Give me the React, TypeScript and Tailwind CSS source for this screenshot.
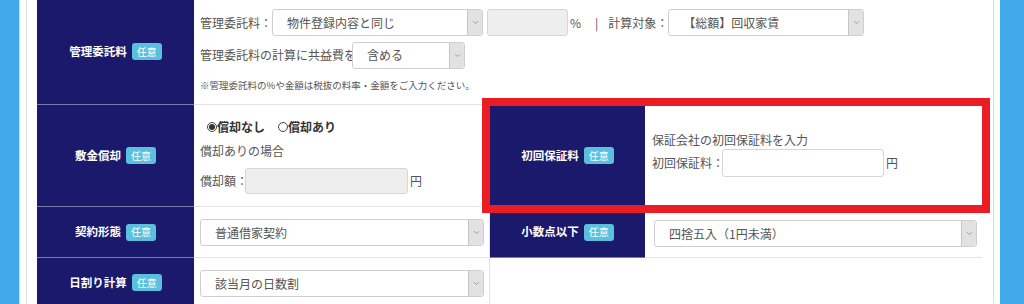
import React from 'react';
import { ChevronDown } from 'lucide-react';

const font = "font-['Noto_Sans_CJK_JP','Noto_Sans',sans-serif]";

function Badge() {
  return (
    <span className="inline-flex h-[17px] items-center rounded-[3px] bg-[#5bc0de] px-[5px] text-[10px] font-normal leading-none text-white">
      任意
    </span>
  );
}

function LabelCell({ title, className = '' }: { title: string; className?: string }) {
  return (
    <div className={`flex items-center justify-center gap-[5px] border-b border-[#7a7aab] bg-[#1b196b] ${className}`}>
      <span className="whitespace-nowrap text-[11.5px] font-bold text-white">{title}</span>
      <Badge />
    </div>
  );
}

function Select({ value, className = '' }: { value: string; className?: string }) {
  return (
    <div className={`flex h-[27px] shrink-0 items-stretch rounded-[3px] border border-[#cfcfcf] bg-white ${className}`}>
      <div className="flex flex-1 items-center whitespace-nowrap pl-[14px] text-[12px] text-[#555]">{value}</div>
      <div className="flex w-[15px] items-center justify-center rounded-r-[3px] border-l border-[#c6c6c6] bg-[#e2e2e2]">
        <ChevronDown size={9} strokeWidth={2} className="text-[#8a8a8a]" />
      </div>
    </div>
  );
}

function Radio({ checked, label }: { checked?: boolean; label: string }) {
  return (
    <span className="flex items-center">
      <span className="flex h-[10px] w-[10px] items-center justify-center rounded-full border border-[#444] bg-white">
        {checked && <span className="h-[6px] w-[6px] rounded-full bg-[#333]" />}
      </span>
      <span className="whitespace-nowrap text-[12px] font-bold text-[#333]">{label}</span>
    </span>
  );
}

export default function App() {
  return (
    <div className={`flex h-[304px] w-[1024px] overflow-hidden bg-white ${font}`}>
      <div className="w-[20px] border-r border-[#bfe0f7] bg-[#42aaec]" />
      <div className="flex-1 px-[6px]">
        <div className="h-full border-x border-[#dedede] pl-[10px] pr-[11px]">
          <div className="relative -mt-[1px] grid grid-cols-[157px_296px_155px_337px] grid-rows-[106px_102px_51px_50px] text-[#555]">
            {/* row 1 */}
            <LabelCell title="管理委託料" />
            <div className="col-span-3 border-b border-[#e3e3e3] pl-[6px] pt-[10px]">
              <div className="flex h-[27px] items-center whitespace-nowrap text-[12px]">
                <span className="w-[72px] shrink-0">管理委託料：</span>
                <Select value="物件登録内容と同じ" className="w-[211px]" />
                <div className="ml-[4px] h-[27px] w-[81px] shrink-0 rounded-[3px] border border-[#d6d6d6] bg-[#eeeeee]" />
                <span className="ml-[2px] text-[#555]">%</span>
                <span className="ml-[14px] text-[#555]">|</span>
                <span className="ml-[10px] w-[60px] shrink-0">計算対象：</span>
                <Select value="【総額】回収家賃" className="w-[196px]" />
              </div>
              <div className="mt-[6px] flex h-[26px] items-center whitespace-nowrap text-[12px]">
                <span className="w-[152px] shrink-0">管理委託料の計算に共益費を</span>
                <Select value="含める" className="h-[26px] w-[113px]" />
              </div>
              <div className="mt-[10px] whitespace-nowrap text-[9.5px] text-[#555]">※管理委託料の%や金額は税抜の料率・金額をご入力ください。</div>
            </div>

            {/* row 2 */}
            <LabelCell title="敷金償却" />
            <div className="border-b border-r border-[#e3e3e3] pl-[6px] pt-[14px] text-[12px]">
              <div className="flex h-[16px] items-center gap-[13px] pl-[7px]">
                <Radio checked label="償却なし" />
                <Radio label="償却あり" />
              </div>
              <div className="mt-[8px] h-[16px] leading-[16px]">償却ありの場合</div>
              <div className="mt-[9px] flex h-[26px] items-center whitespace-nowrap">
                <span className="w-[45px] shrink-0">償却額：</span>
                <div className="h-[26px] w-[163px] shrink-0 rounded-[3px] border border-[#d6d6d6] bg-[#eeeeee]" />
                <span className="ml-[2px]">円</span>
              </div>
            </div>
            <LabelCell title="初回保証料" />
            <div className="flex flex-col justify-center border-b border-[#e3e3e3] pb-[2px] pl-[7px] text-[12px]">
              <div className="h-[16px] whitespace-nowrap leading-[16px]">保証会社の初回保証料を入力</div>
              <div className="mt-[1px] flex h-[28px] items-center whitespace-nowrap">
                <span className="w-[70px] shrink-0">初回保証料：</span>
                <div className="h-[28px] w-[162px] shrink-0 rounded-[3px] border border-[#d6d6d6] bg-white" />
                <span className="ml-[2px]">円</span>
              </div>
            </div>

            {/* row 3 */}
            <LabelCell title="契約形態" />
            <div className="border-b border-r border-[#e3e3e3] pl-[6px] pt-[12px]">
              <Select value="普通借家契約" className="w-[284px]" />
            </div>
            <LabelCell title="小数点以下" />
            <div className="border-b border-[#e3e3e3] pl-[9px] pt-[13px]">
              <Select value="四捨五入（1円未満）" className="w-[323px]" />
            </div>

            {/* row 4 */}
            <LabelCell title="日割り計算" />
            <div className="border-r border-[#e3e3e3] pl-[6px] pt-[12px]">
              <Select value="該当月の日数割" className="w-[284px]" />
            </div>
            <div className="col-span-2" />

            <div className="absolute left-[445px] top-[99px] h-[115px] w-[508px] border-[8px] border-[#ec1c24]" />
          </div>
        </div>
      </div>
      <div className="w-[24px] bg-[#42aaec]" />
    </div>
  );
}
